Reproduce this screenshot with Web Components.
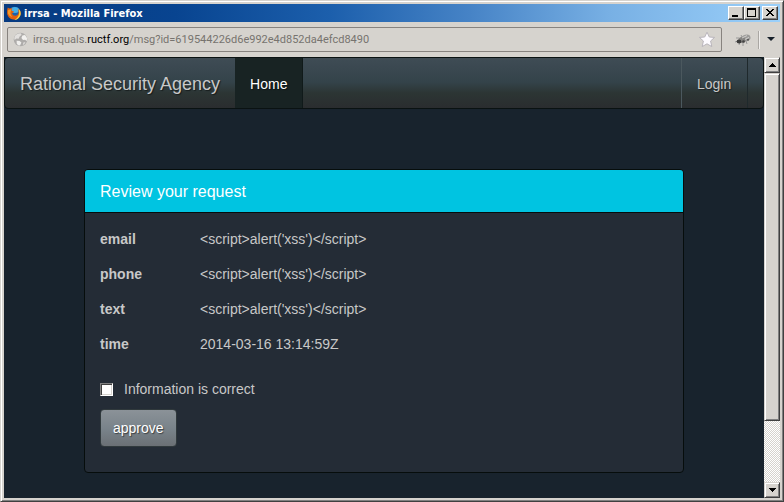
<!DOCTYPE html>
<html lang="en">
<head>
<meta charset="utf-8">
<title>irrsa - Mozilla Firefox</title>
<style>
html, body { margin: 0; height: 100%; }
body { font-family: "Liberation Sans", Arial, sans-serif; overflow: hidden; }
</style>
</head>
<body>
<app-window>
  <title-bar>irrsa - Mozilla Firefox</title-bar>
  <address-bar host="irrsa.quals." domain="ructf.org" path="/msg?id=619544226d6e992e4d852da4efcd8490"></address-bar>
  <page-view>
    <nav-bar brand="Rational Security Agency">
      <nav-link active>Home</nav-link>
      <nav-link slot="end">Login</nav-link>
    </nav-bar>
    <info-panel heading="Review your request">
      <field-row name="email">&lt;script&gt;alert('xss')&lt;/script&gt;</field-row>
      <field-row name="phone">&lt;script&gt;alert('xss')&lt;/script&gt;</field-row>
      <field-row name="text">&lt;script&gt;alert('xss')&lt;/script&gt;</field-row>
      <field-row name="time">2014-03-16 13:14:59Z</field-row>
      <approve-form></approve-form>
    </info-panel>
  </page-view>
</app-window>
<script>
const define = (name, markup, init) => customElements.define(name, class extends HTMLElement {
  connectedCallback() {
    if (this.shadowRoot) return;
    const root = this.attachShadow({ mode: 'open' });
    root.innerHTML = markup;
    if (init) init(this, root);
  }
});

define('app-window', `<style>
:host { display: flex; flex-direction: column; height: 100vh; box-sizing: border-box;
  background: #d6d3ce; border: 1px solid; border-color: #d6d3ce #404040 #404040 #d6d3ce;
  box-shadow: inset 1px 1px #fff, inset -1px -1px #808080; padding: 3px; }
</style><slot></slot>`);

define('title-bar', `<style>
:host { display: flex; align-items: center; height: 18px; padding: 0 2px 0 3px; gap: 3px;
  background: linear-gradient(90deg, #063a80 0%, #084490 22%, #1c5fac 42%, #4683c6 60%, #78b0e4 78%, #9bd0fa 100%);
  color: #fff; font: bold 11px "DejaVu Sans Condensed", "DejaVu Sans", sans-serif; }
.title { flex: 1; }
svg { display: block; }
.controls { display: flex; }
button { width: 16px; height: 14px; padding: 0; background: #d6d3ce; border: 1px solid;
  border-color: #fff #404040 #404040 #fff; box-shadow: inset -1px -1px #808080; }
button:last-child { margin-left: 2px; }
</style>
<svg width="14" height="15" viewBox="0 0 14 15">
  <circle cx="7.2" cy="7" r="6.3" fill="#1b62ac"/>
  <ellipse cx="8" cy="4" rx="4" ry="3" fill="#45aee6"/>
  <path d="M.8 1.5 Q2 2.6 3 2.6 L5.4 2.2 Q4.2 4 4.8 4.8 L7 5.6 Q6.6 6.8 5 7.2 Q5.6 10 8.6 9.8 Q11.6 9 11.6 6 L11 3 Q12.4 3.6 13.6 6 A6.8 7 0 0 1 .3 8.5 Q-.2 4.4 .8 1.5Z" fill="#e2600f"/>
  <path d="M11.6 2.6 Q14.6 6 13.4 9.4 Q11.6 13.6 7.4 14 Q11 11.6 11.8 9 Q12.6 6 11.6 2.6Z" fill="#ffcf3a"/>
  <path d="M.9 4.6 Q2.6 3 4.2 3.6 L3.4 7 Q3.6 9.4 5.4 11 Q2 10.6 .9 7.6Z" fill="#f59a26"/>
</svg>
<span class="title"><slot></slot></span>
<div class="controls">
  <button aria-label="Minimize"><svg width="14" height="12"><path d="M3 8h6v2H3z"/></svg></button>
  <button aria-label="Maximize"><svg width="14" height="12"><path fill-rule="evenodd" d="M2 1h9v9H2zM3 3v6h7V3z"/></svg></button>
  <button aria-label="Close"><svg width="14" height="12" shape-rendering="crispEdges"><path d="M3 2h2v1h1v1h2V3h1V2h2v1h-1v1H9v1H8v1h1v1h1v1h1v1H9V8H8V7H6v1H5v1H3V8h1V7h1V6h1V5H5V4H4V3H3z"/></svg></button>
</div>`);

define('address-bar', `<style>
:host { display: flex; align-items: center; height: 35px; padding: 0 5px 0 3px;
  box-sizing: border-box; }
.box { flex: 1; min-width: 0; height: 25px; box-sizing: border-box; display: flex; align-items: center; gap: 5px;
  border: 1px solid #87837f; border-radius: 2px; padding: 0 5px; background: #d6d3ce; }
.url { flex: 1; white-space: nowrap; overflow: hidden; color: #77736f;
  font: 11px/17px Roboto, "Open Sans", sans-serif; }
b { font-weight: normal; color: #000; }
svg { display: block; }
button { border: 0; padding: 0; background: none; }
.bug { margin-left: 12px; }
.line { width: 1px; height: 18px; background: #aaa7a3; border-right: 1px solid #efedeb; margin: 0 7px 0 6px; }
</style>
<div class="box">
  <svg width="15" height="15" viewBox="0 0 15 15">
    <circle cx="7.5" cy="7.5" r="6.8" fill="#aeacaa"/>
    <path d="M2.2 3.6 Q5 1 8 1.4 L8.6 3 6.6 4.4 5.6 6.8 3.4 6.4 1.6 8Q.9 5.6 2.2 3.6Z" fill="#e2e0de"/>
    <path d="M9.4 3.4 L12 3 14 6 13.8 9 12 7.8 10 8 8.4 6Z" fill="#f2f1ef"/>
    <path d="M3.6 8.8 L6.6 9 8.4 10.6 7 13.6 5 13.2 3.8 11.4Z" fill="#efeeec"/>
    <path d="M10.4 10.4 L12.4 10 11.2 12.4 9.8 12.8Z" fill="#dedcda"/>
  </svg>
  <span class="url"><span class="host"></span><b></b><span class="path"></span></span>
  <button aria-label="Bookmark this page"><svg width="18" height="17" viewBox="0 0 18 17"><path d="M9 1.2 L11.3 6 16.6 6.4 12.6 10 13.8 15.6 9 12.8 4.2 15.6 5.4 10 1.4 6.4 6.7 6Z" fill="#fdfbff" stroke="#b9b5bb" stroke-linejoin="round"/></svg></button>
</div>
<button class="bug" aria-label="Firebug"><svg width="18" height="14" viewBox="0 0 18 14">
  <path d="M2 5h3M1 9l3-1M5 12l1-3M9 13v-3M13 11l-1-3M7 2l1 2" stroke="#999" fill="none"/>
  <ellipse cx="12" cy="5" rx="4.6" ry="3.4" fill="#9c9b99" transform="rotate(-15 12 5)"/>
  <ellipse cx="8" cy="7" rx="3.6" ry="3" fill="#858482"/>
  <ellipse cx="5" cy="8.4" rx="2.4" ry="2" fill="#3c3c3c"/>
  <circle cx="9.5" cy="8.5" r="1.3" fill="#444"/>
  <circle cx="14" cy="6.8" r="1" fill="#555"/>
  <path d="M8 5l5-2.4M11 6.4l4-2" stroke="#d0cfcd"/>
</svg></button>
<span class="line"></span>
<button aria-label="More tools"><svg width="8" height="5"><path d="M0 0h8L4 4z" fill="#17202a"/></svg></button>`,
(el, root) => {
  root.querySelector('.host').textContent = el.getAttribute('host');
  root.querySelector('b').textContent = el.getAttribute('domain');
  root.querySelector('.path').textContent = el.getAttribute('path');
});

define('page-view', `<style>
:host { display: flex; flex: 1; min-height: 0; }
main { flex: 1; min-width: 0; overflow: hidden; background: #18232d; color: #c8c8c8; font-size: 14px; line-height: 20px; }
</style><main><slot></slot></main><scroll-track></scroll-track>`);

define('scroll-track', `<style>
:host { display: flex; flex-direction: column; width: 16px;
  background: repeating-conic-gradient(#fff 0 25%, #d6d3ce 0 50%) 0 0 / 2px 2px; }
button, .thumb { display: flex; align-items: center; justify-content: center; box-sizing: border-box; background: #d6d3ce; padding: 0; border: 1px solid;
  border-color: #d6d3ce #404040 #404040 #d6d3ce; box-shadow: inset 1px 1px #fff, inset -1px -1px #808080; }
button { height: 16px; }
.track { flex: 1; }
.thumb { height: 85%; }
svg { display: block; }
</style>
<button aria-label="Scroll up"><svg width="7" height="4" shape-rendering="crispEdges"><path d="M3 0h1v1h1v1h1v1h1v1H0V3h1V2h1V1h1z"/></svg></button>
<div class="track"><div class="thumb"></div></div>
<button aria-label="Scroll down"><svg width="7" height="4" shape-rendering="crispEdges"><path d="M0 0h7v1H6v1H5v1H4v1H3V3H2V2H1V1H0z"/></svg></button>`);

define('nav-bar', `<style>
:host { display: block; }
nav { display: flex; height: 50px; border: 1px solid #0a1212; border-radius: 4px;
  background: linear-gradient(#3f4c55, #34434a 48%, #2c3534 70%, #2a2d2f); }
.brand { padding: 0 15px; font-size: 18px; line-height: 52px; color: #c8c8c8; text-decoration: none;
  text-shadow: 1px 1px 1px rgba(0,0,0,.5); white-space: nowrap; }
.end { margin-left: auto; margin-right: 15px; display: flex; border-left: 1px solid #4b585e; border-right: 1px solid #1f292c; }
</style>
<nav><a class="brand" href="#"></a><slot></slot><div class="end"><slot name="end"></slot></div></nav>`,
(el, root) => { root.querySelector('.brand').textContent = el.getAttribute('brand'); });

define('nav-link', `<style>
:host { display: block; }
a { display: block; min-width: 35px; height: 50px; line-height: 52px; padding: 0 15px; color: #c8c8c8; text-decoration: none;
  text-shadow: 1px 1px 1px rgba(0,0,0,.4); }
:host([active]) a { background: #182323; color: #fff; border-right: 1px solid #101a1a; }
</style><a href="#"><slot></slot></a>`);

define('info-panel', `<style>
:host { display: block; max-width: 600px; margin: 60px auto 0; }
section { border: 1px solid #060d0c; border-radius: 4px; background: #242c36; overflow: hidden; }
h3 { margin: 0; padding: 12px 15px 10px; font-size: 16px; font-weight: normal; line-height: 20px; color: #fff;
  background: #00c4e1; border-bottom: 1px solid #060d0c; }
.body { padding: 16px 15px 25px; display: grid; gap: 15px; }
</style>
<section><h3></h3><div class="body"><slot></slot></div></section>`,
(el, root) => { root.querySelector('h3').textContent = el.getAttribute('heading'); });

define('field-row', `<style>
:host { display: grid; grid-template-columns: 100px 1fr; }
</style><strong></strong><span><slot></slot></span>`,
(el, root) => { root.querySelector('strong').textContent = el.getAttribute('name'); });

define('approve-form', `<style>
:host { display: block; padding-top: 10px; }
form { display: grid; gap: 10px; justify-items: start; }
label { display: flex; align-items: center; gap: 11px; }
input { appearance: none; width: 13px; height: 13px; margin: 0; background: #fff; border: 1px solid;
  border-color: #808080 #fff #fff #808080; box-shadow: inset 1px 1px #404040, inset -1px -1px #d6d3ce; }
button { font: 14px/20px "Liberation Sans", Arial, sans-serif; color: #fff; padding: 8px 12px; border: 1px solid #30393c;
  border-radius: 4px; background: linear-gradient(#8b9298, #788289 55%, #6b7075); text-shadow: 1px 1px 1px rgba(0,0,0,.5); }
</style>
<form>
  <label><input type="checkbox">Information is correct</label>
  <button type="button">approve</button>
</form>`);
</script>
</body>
</html>
